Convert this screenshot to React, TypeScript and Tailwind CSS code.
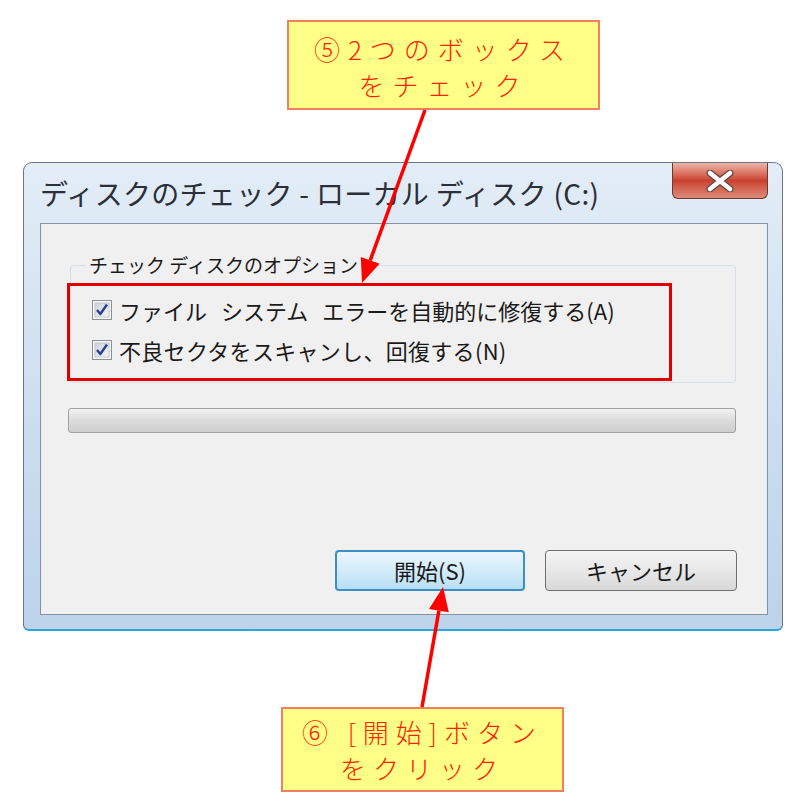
import React from 'react';

const jp = { fontFamily: '"Noto Sans CJK JP", "Noto Sans", sans-serif' };

const CheckBox: React.FC = () => (
  <svg width="20" height="20" viewBox="0 0 20 20" className="shrink-0">
    <defs>
      <linearGradient id="cbg" x1="0" y1="0" x2="1" y2="1">
        <stop offset="0" stopColor="#cfd3d8" />
        <stop offset="1" stopColor="#f4f4f4" />
      </linearGradient>
    </defs>
    <rect x="0.5" y="0.5" width="19" height="19" fill="#f6f6f6" stroke="#8e8f8f" />
    <rect x="3" y="3" width="14" height="14" fill="url(#cbg)" stroke="#b9bec5" strokeWidth="0.8" />
    <path d="M5 10 L8.3 14 L15 4.5" fill="none" stroke="#25409a" strokeWidth="2.4" strokeLinejoin="round" />
  </svg>
);

const Gap: React.FC = () => <span className="inline-block w-[14px]" />;

const Callout: React.FC<{ lines: string[]; className: string }> = ({ lines, className }) => (
  <div
    className={`flex flex-col items-center justify-center border-2 border-[#f08060] bg-[#ffff88] text-[26px] font-light leading-[36px] tracking-[7px] text-[#ff2200] ${className}`}
    style={jp}
  >
    {lines.map((l, i) => (
      <div key={i} className="whitespace-pre">{l}</div>
    ))}
  </div>
);

const App: React.FC = () => {
  return (
    <div className="relative h-[809px] w-[800px] overflow-hidden bg-white" style={jp}>
      <Callout lines={['⑤2つのボックス', 'をチェック']} className="ml-[287px] mt-[20px] h-[90px] w-[313px] pt-[4px] tracking-[8px]" />

      {/* window */}
      <div className="ml-[23px] mt-[52px] flex h-[469px] w-[760px] flex-col rounded-t-[9px] rounded-b-[6px] border border-[#6b7786] border-b-2 border-b-[#2aa8dc] bg-gradient-to-b from-[#e3edf7] via-[#cddff0] to-[#bcd3ea]">
        <div className="flex h-[60px] items-start">
          <div className="ml-[16px] mt-[12px] text-[28px] leading-[36px] tracking-[0.3px] text-[#2a2f38]">
            ディスクのチェック - ローカル ディスク (C:)
          </div>
          <div className="ml-auto mr-[14px] flex h-[36px] w-[96px] items-center justify-center rounded-b-[6px] border border-t-0 border-[#6b3a34] bg-gradient-to-b from-[#eeb4a8] via-[#c9402e] to-[#dd8a78]">
            <svg width="34" height="22" viewBox="0 0 34 22">
              <path d="M7 3 L27 19 M27 3 L7 19" stroke="#5a4a4a" strokeWidth="7" strokeLinecap="round" />
              <path d="M7 3 L27 19 M27 3 L7 19" stroke="#ffffff" strokeWidth="4.5" strokeLinecap="round" />
            </svg>
          </div>
        </div>

        <div className="ml-[16px] h-[392px] w-[728px] border border-[#8592a3] bg-[#f0f0f0]">
          {/* group box */}
          <div className="relative ml-[29px] mt-[41px] h-[118px] w-[666px] rounded-[4px] border border-[#d5dfe5]">
            <div className="absolute -top-[14px] left-[14px] bg-[#f0f0f0] px-[4px] text-[19px] leading-[26px] text-[#1a1a1a]">
              チェック ディスクのオプション
            </div>
            <div className="flex flex-col gap-[20px] pl-[21px] pt-[34px] text-[22px] leading-[20px] text-[#1a1a1a]">
              <div className="flex items-center gap-[7px]">
                <CheckBox />
                <span>ファイル<Gap />システム<Gap />エラーを自動的に修復する(A)</span>
              </div>
              <div className="flex items-center gap-[7px]">
                <CheckBox />
                <span className="tracking-[0.3px]">不良セクタをスキャンし、回復する(N)</span>
              </div>
            </div>
            {/* red annotation frame */}
            <div className="absolute -left-[4px] top-[17px] h-[98px] w-[605px] border-[3px] border-[#e00000]" />
          </div>

          {/* progress bar */}
          <div className="ml-[27px] mt-[25px] h-[25px] w-[668px] rounded-[3px] border border-[#a2a2a2] bg-gradient-to-b from-[#f2f2f2] via-[#dcdcdc] to-[#cfcfcf]" />

          {/* buttons */}
          <div className="ml-[294px] mt-[117px] flex gap-[20px] text-[22px] text-[#1a1a1a]">
            <div className="flex h-[41px] w-[190px] items-center justify-center rounded-[4px] border-2 border-[#3c8fc4] bg-gradient-to-b from-[#eaf6fd] via-[#d3ecfa] to-[#b9def5]">
              開始(S)
            </div>
            <div className="flex h-[41px] w-[192px] items-center justify-center rounded-[4px] border border-[#707070] bg-gradient-to-b from-[#f4f4f4] via-[#e8e8e8] to-[#d8d8d8]">
              キャンセル
            </div>
          </div>
        </div>
      </div>

      <Callout lines={['⑥ [開始]ボタン', 'をクリック']} className="ml-[281px] mt-[76px] h-[85px] w-[283px]" />

      {/* arrows */}
      <svg className="pointer-events-none absolute left-0 top-0" width="800" height="809">
        <line x1="425" y1="110" x2="370.2" y2="260.4" stroke="#ff0000" strokeWidth="3.5" />
        <polygon points="362,283 379.6,263.8 360.8,257" fill="#ff0000" />
        <line x1="422" y1="707" x2="438.9" y2="610.6" stroke="#ff0000" strokeWidth="3.5" />
        <polygon points="443,587 448.8,612.3 429,608.9" fill="#ff0000" />
      </svg>
    </div>
  );
};

export default App;
